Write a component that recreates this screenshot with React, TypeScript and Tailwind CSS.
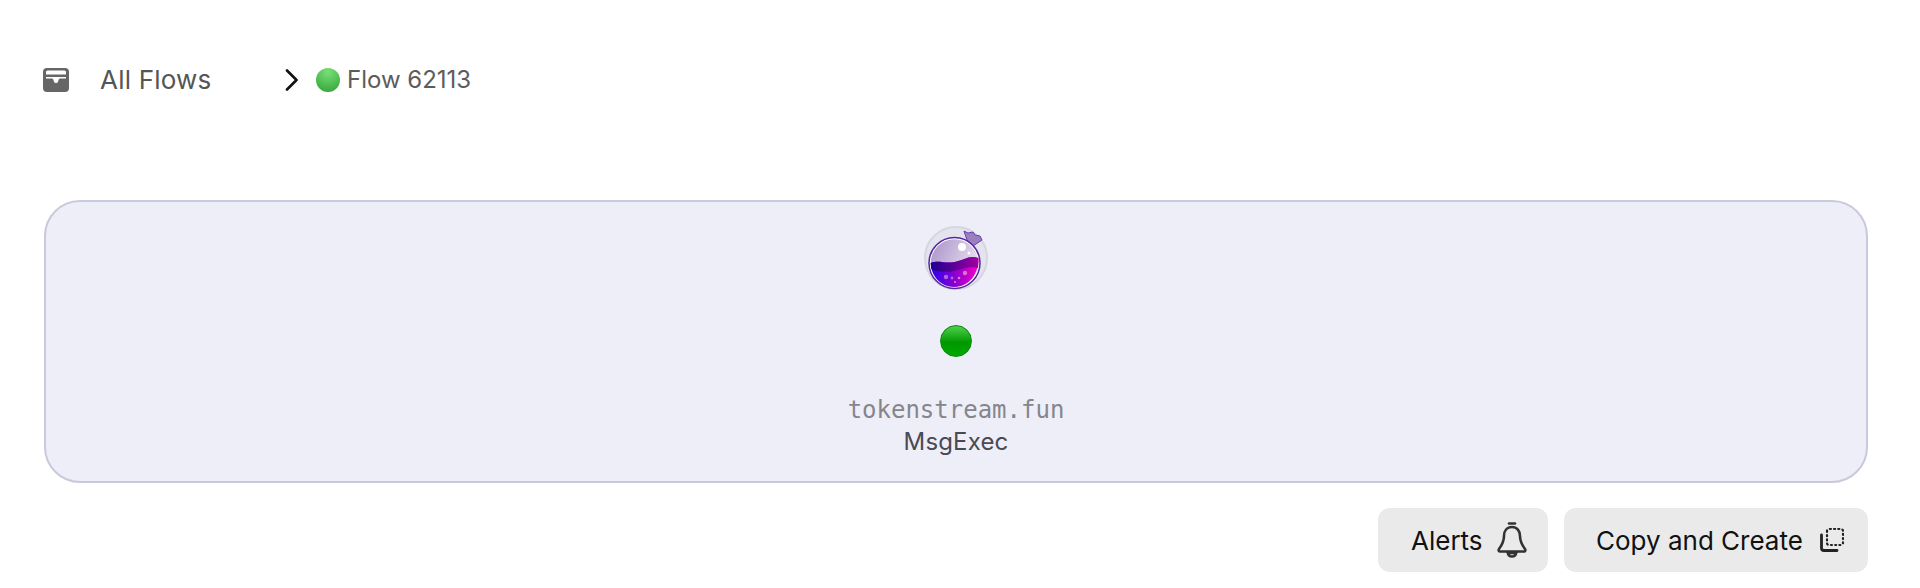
import React from 'react';

const InboxIcon = () => (
  <svg width="26" height="24" viewBox="0 0 26 24" className="shrink-0 -ml-px">
    <path fillRule="evenodd" fill="#666666" d="M4 0h18a4 4 0 0 1 4 4v16a4 4 0 0 1-4 4H4a4 4 0 0 1-4-4V4a4 4 0 0 1 4-4Zm.5 2.500A1.500 1.500 0 0 0 3 4v2.500h20V4a1.500 1.500 0 0 0-1.500-1.500h-17ZM3 9v1.500h5.800c.7 0 1.200.4 1.500 1l.8 2.500c.3.600.9 1 1.600 1h.6c.7 0 1.300-.4 1.600-1l.8-2.500c.3-.6.8-1 1.500-1H23V9H3Z" />
  </svg>
);

const Chevron = () => (
  <svg width="15" height="22" viewBox="0 0 15 22" fill="none" stroke="#111111" strokeWidth="2.600" strokeLinecap="round" strokeLinejoin="round">
    <path d="M3 1.500l9.500 9.500L3 20.500" />
  </svg>
);

const BellIcon = () => (
  <svg width="32" height="36" viewBox="0 0 32 36" fill="none" stroke="#333333" strokeWidth="2.600" strokeLinecap="round" strokeLinejoin="round">
    <path d="M13 1.500h6" />
    <path d="M16 5c-5 0-8 3.800-8 9 0 6-2 9-5 13-.8 1.200-.3 2.500 1.200 2.500h23.600c1.500 0 2-1.300 1.200-2.500-3-4-5-7-5-13 0-5.200-3-9-8-9Z" />
    <path d="M11.500 30c.5 2.800 2.300 4.500 4.500 4.500s4-1.700 4.500-4.500" />
    <path d="M14 31h4" />
  </svg>
);

const CopyIcon = () => (
  <svg width="24" height="24" viewBox="0 0 24 24" fill="none" stroke="#222222" strokeWidth="2.200" strokeLinecap="round">
    <path d="M1.500 7v13a2.500 2.500 0 0 0 2.500 2.500h13" strokeWidth="2.800" />
    <path d="M7 3v12a2 2 0 0 0 2 2h12a2 2 0 0 0 2-2V3a2 2 0 0 0-2-2H9a2 2 0 0 0-2 2Z" strokeDasharray="1 3.200" />
  </svg>
);

const FlaskLogo = () => (
  <svg width="66" height="66" viewBox="0 0 66 66">
    <defs>
      <linearGradient id="glass" x1="0" y1="0" x2="1" y2="0.500">
        <stop offset="0" stopColor="#a890c8" />
        <stop offset="1" stopColor="#e8e0f0" />
      </linearGradient>
      <linearGradient id="liquid" x1="0" y1="0" x2="1" y2="0">
        <stop offset="0" stopColor="#2a00f0" />
        <stop offset="0.500" stopColor="#8a00d0" />
        <stop offset="1" stopColor="#f800c8" />
      </linearGradient>
      <linearGradient id="liquidTop" x1="0" y1="0" x2="1" y2="0">
        <stop offset="0" stopColor="#1e0090" />
        <stop offset="1" stopColor="#a000a0" />
      </linearGradient>
    </defs>
    <circle cx="33" cy="33" r="31" fill="#e4e4ee" stroke="#d6d6e2" strokeWidth="2" />
    <path d="M41 6l3 9 6 6 9-6-2-4-5-1-2-3-5 1Z" fill="#9a80c0" stroke="#6a3fb0" strokeWidth="1" />
    <circle cx="31.500" cy="38" r="25.500" fill="#ffffff" stroke="#5326a0" strokeWidth="1.500" />
    <circle cx="31.500" cy="38" r="23.800" fill="url(#glass)" />
    <path d="M7.800 38c8-3 14 1 24-1s14-7 23.500-4c1 15-9 29-23.800 29S8 50 7.800 38Z" fill="url(#liquid)" />
    <path d="M7.800 38c8-3 14 1 24-1s14-7 23.500-4c.3 3 .2 6-.3 10-8-2-14 1-24 3s-16 0-22-1c-.9-2-1.200-4-1.200-7Z" fill="url(#liquidTop)" />
    <circle cx="39" cy="22" r="4" fill="#ffffff" />
    <circle cx="46" cy="28" r="1.500" fill="#ffffff" />
    <circle cx="23" cy="52" r="2.200" fill="#a868e0" />
    <circle cx="29" cy="53" r="1.400" fill="#a868e0" />
    <circle cx="36" cy="53" r="1.300" fill="#d080e0" />
    <circle cx="42" cy="48" r="2.200" fill="#e070d0" />
    <circle cx="32" cy="57" r="1" fill="#d080e0" />
  </svg>
);

const App: React.FC = () => {
  return (
    <div className="w-[1920px] h-[588px] bg-white pl-[44px] pr-[52px] font-['Inter',sans-serif] overflow-hidden">
      {/* breadcrumb */}
      <div className="flex items-center h-[200px] pb-[40px]">
        <InboxIcon />
        <span className="ml-[31px] w-[184px] text-[26px] leading-none tracking-[0.2px] text-[#555555]">All Flows</span>
        <Chevron />
        <span className="ml-[17px] flex items-center gap-[7px] text-[24px] leading-none text-[#5c5c5c]">
          <span className="w-[24px] h-[24px] rounded-full bg-[radial-gradient(circle_at_50%_15%,#78e078,#2fa035)]"></span>
          Flow 62113
        </span>
      </div>

      {/* flow card */}
      <div className="h-[283px] rounded-[36px] border-2 border-[#c9c9dc] bg-[#eeeef8] flex flex-col items-center pt-[23px]">
        <FlaskLogo />
        <span className="mt-[34px] w-[32px] h-[32px] rounded-full border border-[#0a8a0a] bg-[linear-gradient(#4fd04f,#009800_55%,#00a800)]"></span>
        <span className="mt-[37px] text-[24px] leading-[32px] font-['DejaVu_Sans_Mono',monospace] text-[#85858d]">tokenstream.fun</span>
        <span className="text-[24px] leading-[32px] tracking-[0.15px] text-[#4a4a52]">MsgExec</span>
      </div>

      {/* actions */}
      <div className="flex justify-end gap-[16px] mt-[25px]">
        <button className="h-[64px] w-[170px] pl-[33px] rounded-[12px] bg-[#eaeaea] flex items-center gap-[13px] text-[26px] text-[#111111]">
          Alerts
          <BellIcon />
        </button>
        <button className="h-[64px] w-[304px] pl-[32px] rounded-[12px] bg-[#eaeaea] flex items-center gap-[17px] text-[26px] text-[#111111]">
          Copy and Create
          <CopyIcon />
        </button>
      </div>
    </div>
  );
};

export default App;
